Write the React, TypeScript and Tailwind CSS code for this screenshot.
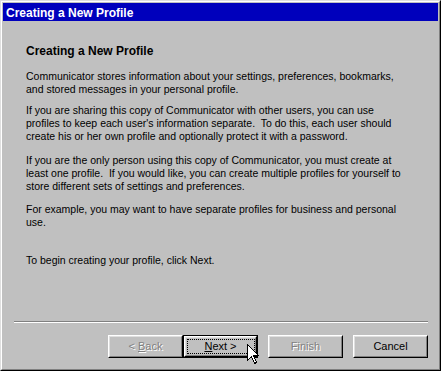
import React from 'react';

const font = { fontFamily: '"Liberation Sans", Arial, sans-serif' };

interface WizardButtonProps {
  label: React.ReactNode;
  disabled?: boolean;
  isDefault?: boolean;
}

function WizardButton({ label, disabled, isDefault }: WizardButtonProps) {
  const face = (
    <div className="flex h-full w-full border border-t-white border-l-white border-r-black border-b-black">
      <div className="flex h-full w-full items-center justify-center border border-t-[#dfdfdf] border-l-[#dfdfdf] border-r-[#808080] border-b-[#808080] bg-[#c0c0c0]">
        {isDefault ? (
          <div className="flex h-[15px] w-[68px] items-center justify-center border border-dotted border-black text-[11px] leading-[13px] text-black">
            {label}
          </div>
        ) : (
          <span
            className={
              disabled
                ? 'text-[11px] leading-[13px] text-[#808080] [text-shadow:1px_1px_0_#ffffff]'
                : 'text-[11px] leading-[13px] text-black'
            }
          >
            {label}
          </span>
        )}
      </div>
    </div>
  );

  if (isDefault) {
    return <div className="h-[23px] w-[75px] border border-black">{face}</div>;
  }
  return <div className="h-[23px] w-[75px]">{face}</div>;
}

export default function App() {
  return (
    <div
      className="relative h-[371px] w-[441px] border border-t-[#dfdfdf] border-l-[#dfdfdf] border-r-black border-b-black bg-[#c0c0c0]"
      style={font}
    >
      <div className="flex h-full w-full flex-col border border-t-white border-l-white border-r-[#808080] border-b-[#808080] p-px">
        <div className="flex h-[18px] items-center bg-[#0000bc] pl-[3px] pt-px text-[12px] font-bold text-white">
          Creating a New Profile
        </div>

        <div className="pl-[23px] text-[10.5px] leading-[13px] text-black">
          <div className="mt-[24px] h-[13px] text-[12px] font-bold">Creating a New Profile</div>

          <p className="mt-[12px] whitespace-nowrap">
            Communicator stores information about your settings, preferences, bookmarks,
            <br />
            and stored messages in your personal profile.
          </p>
          <p className="mt-[8px] whitespace-nowrap">
            If you are sharing this copy of Communicator with other users, you can use
            <br />
            profiles to keep each user's information separate.&nbsp; To do this, each user should
            <br />
            create his or her own profile and optionally protect it with a password.
          </p>
          <p className="mt-[11px] whitespace-nowrap">
            If you are the only person using this copy of Communicator, you must create at
            <br />
            least one profile.&nbsp; If you would like, you can create multiple profiles for yourself to
            <br />
            store different sets of settings and preferences.
          </p>
          <p className="mt-[10px] whitespace-nowrap">
            For example, you may want to have separate profiles for business and personal
            <br />
            use.
          </p>
          <p className="mt-[25px] whitespace-nowrap">To begin creating your profile, click Next.</p>
        </div>

        <div className="ml-[11px] mt-[54px] w-[414px]">
          <div className="h-px bg-[#808080]" />
          <div className="h-px bg-white" />
        </div>

        <div className="mt-[12px] flex pr-[10px] justify-end">
          <WizardButton
            disabled
            label={
              <>
                &lt; <span className="underline">B</span>ack
              </>
            }
          />
          <WizardButton
            isDefault
            label={
              <>
                <span className="underline">N</span>ext &gt;
              </>
            }
          />
          <div className="ml-[10px]">
            <WizardButton disabled label="Finish" />
          </div>
          <div className="ml-[10px]">
            <WizardButton label="Cancel" />
          </div>
        </div>
      </div>

      {/* mouse pointer over the Next button */}
      <svg
        className="absolute left-[246px] top-[343px]"
        width="13"
        height="21"
        viewBox="0 0 13 21"
      >
        <path
          d="M0.5 0.5 L0.5 16.5 L4.5 12.5 L7.5 19.5 L9.5 18.5 L6.5 11.5 L11.5 11.5 Z"
          fill="#ffffff"
          stroke="#000000"
          strokeWidth="1"
          shapeRendering="crispEdges"
        />
      </svg>
    </div>
  );
}
